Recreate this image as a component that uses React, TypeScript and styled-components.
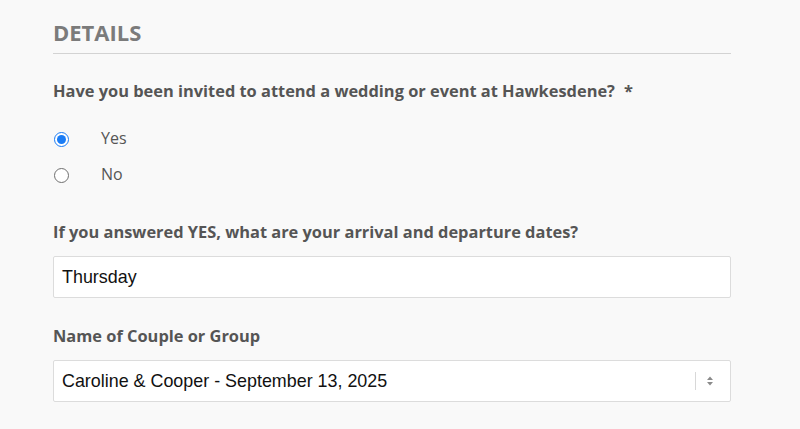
import React from "react";
import styled, { createGlobalStyle } from "styled-components";

const Global = createGlobalStyle`
  html, body { margin: 0; padding: 0; background: #f9f9f9; }
  * { box-sizing: border-box; }
`;

const Page = styled.div`
  padding: 18px 0 0 53px;
  width: 731px;
  font-family: "Open Sans", sans-serif;
`;

const Heading = styled.h2`
  margin: 0;
  font-size: 22px;
  line-height: 28px;
  font-weight: 700;
  color: #7b7b7b;
  padding-bottom: 7px;
  border-bottom: 1px solid #d3d3d3;
`;

const Field = styled.div<{ $top: number }>`
  margin-top: ${(p) => p.$top}px;
  display: flex;
  flex-direction: column;
`;

const Label = styled.div`
  font-size: 16.4px;
  line-height: 22px;
  font-weight: 700;
  color: #555;
`;

const Req = styled.span`
  margin-left: 9px;
`;

const Options = styled.div`
  margin-top: 25px;
  display: flex;
  flex-direction: column;
  gap: 14px;
`;

const Option = styled.label`
  display: flex;
  align-items: center;
  height: 22px;
  font-size: 16px;
  color: #555;
`;

const Radio = styled.span<{ $checked?: boolean }>`
  width: 15px;
  height: 15px;
  margin: 2px 32px 0 1px;
  border-radius: 50%;
  background: #fff;
  border: ${(p) => (p.$checked ? "1.5px solid #1a7cf5" : "1px solid #6f6f6f")};
  display: flex;
  align-items: center;
  justify-content: center;
  &::after {
    content: "";
    display: ${(p) => (p.$checked ? "block" : "none")};
    width: 9px;
    height: 9px;
    border-radius: 50%;
    background: #1a7cf5;
  }
`;

const Box = styled.div`
  margin-top: 13px;
  height: 42px;
  background: #fff;
  border: 1px solid #dcdcdc;
  border-radius: 2px;
  display: flex;
  align-items: center;
  padding: 0 8px;
  font-family: "Liberation Sans", Arial, sans-serif;
  font-size: 17.9px;
  color: #111;
`;

const Value = styled.span`
  flex: 1;
`;

const Divider = styled.span`
  width: 1px;
  height: 18px;
  background: #d8d8d8;
  margin-right: 10px;
`;

const Arrows = () => (
  <svg width="8" height="12" viewBox="0 0 8 12" style={{ marginRight: 8 }}>
    <path d="M4 1.5 L7 5 H1 Z" fill="#8a8a8a" />
    <path d="M4 10.5 L7 7 H1 Z" fill="#8a8a8a" />
  </svg>
);

export default function App() {
  return (
    <>
      <Global />
      <Page>
        <Heading>DETAILS</Heading>
        <Field $top={26}>
          <Label>
            Have you been invited to attend a wedding or event at Hawkesdene?
            <Req>*</Req>
          </Label>
          <Options>
            <Option>
              <Radio $checked />
              Yes
            </Option>
            <Option>
              <Radio />
              No
            </Option>
          </Options>
        </Field>
        <Field $top={36}>
          <Label>If you answered YES, what are your arrival and departure dates?</Label>
          <Box>
            <Value>Thursday</Value>
          </Box>
        </Field>
        <Field $top={27}>
          <Label>Name of Couple or Group</Label>
          <Box>
            <Value>Caroline &amp; Cooper - September 13, 2025</Value>
            <Divider />
            <Arrows />
          </Box>
        </Field>
      </Page>
    </>
  );
}
